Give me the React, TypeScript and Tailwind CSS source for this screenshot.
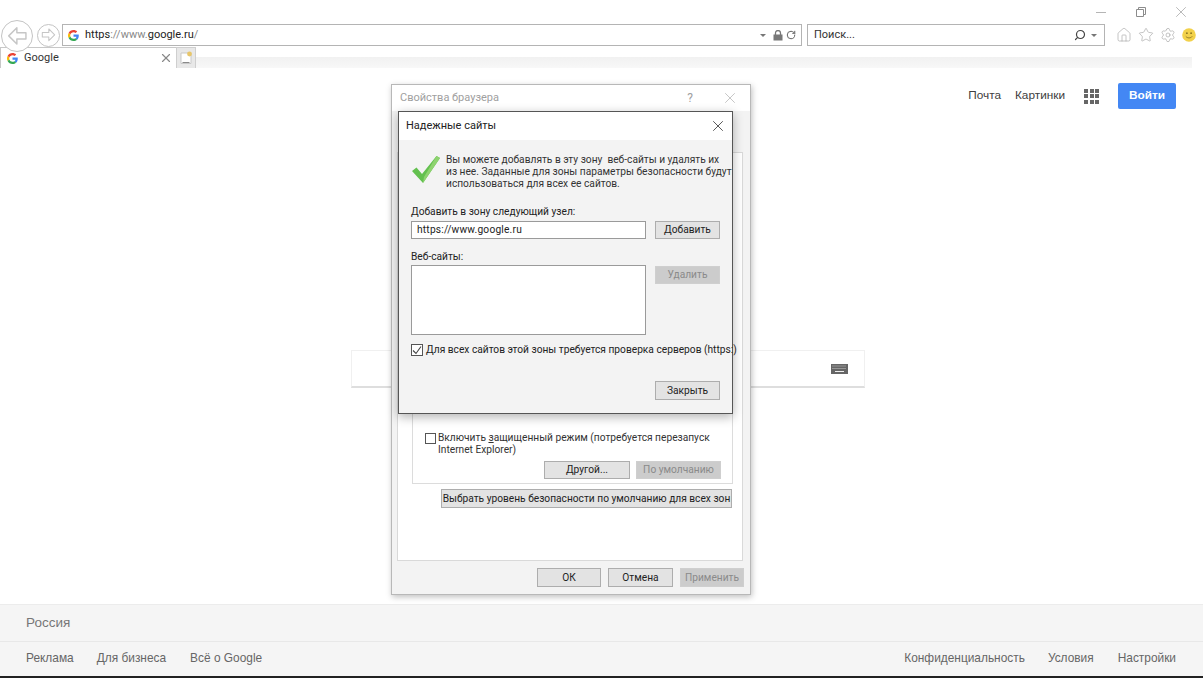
import { Home, RotateCw, Search, Settings, Star, X } from 'lucide-react';

const ui = "font-['Roboto','Open_Sans',sans-serif]";
const web = "font-['Liberation_Sans',Arial,sans-serif]";

function GoogleG({ size = 12 }: { size?: number }) {
  return (
    <svg width={size} height={size} viewBox="0 0 48 48" className="shrink-0">
      <path fill="#EA4335" d="M24 9.5c3.54 0 6.71 1.22 9.21 3.6l6.85-6.85C35.9 2.38 30.47 0 24 0 14.62 0 6.51 5.38 2.56 13.22l7.98 6.19C12.43 13.72 17.74 9.5 24 9.5z" />
      <path fill="#4285F4" d="M46.98 24.55c0-1.57-.15-3.09-.38-4.55H24v9.02h12.94c-.58 2.96-2.26 5.48-4.78 7.18l7.73 6c4.51-4.18 7.09-10.36 7.09-17.65z" />
      <path fill="#FBBC05" d="M10.53 28.59c-.48-1.45-.76-2.99-.76-4.59s.27-3.14.76-4.59l-7.98-6.19C.92 16.46 0 20.12 0 24c0 3.88.92 7.54 2.56 10.78l7.97-6.19z" />
      <path fill="#34A853" d="M24 48c6.48 0 11.93-2.13 15.89-5.81l-7.73-6c-2.15 1.45-4.92 2.3-8.16 2.3-6.26 0-11.57-4.22-13.47-9.91l-7.98 6.19C6.51 42.62 14.62 48 24 48z" />
    </svg>
  );
}

function NavArrow({ size, flip }: { size: number; flip?: boolean }) {
  return (
    <div
      className="flex shrink-0 items-center justify-center rounded-full border border-[#c4c4c4] bg-white"
      style={{ width: size, height: size }}
    >
      <svg
        width={size * 0.68}
        height={size * 0.68}
        viewBox="0 0 24 24"
        fill="none"
        stroke="#c6c6c6"
        strokeWidth="1.6"
        style={flip ? { transform: 'scaleX(-1)' } : undefined}
      >
        <path d="M12 3 3 12l9 9v-5.5h10v-7H12z" strokeLinejoin="round" />
      </svg>
    </div>
  );
}

function WinButton({
  label,
  disabled,
  className,
}: {
  label: React.ReactNode;
  disabled?: boolean;
  className: string;
}) {
  return (
    <div
      className={`flex items-center justify-center border text-[10.2px] ${
        disabled
          ? 'border-[#cfcfcf] bg-[#cccccc] text-[#8a8a8a]'
          : 'border-[#adadad] bg-[#e3e3e3] text-[#222]'
      } ${className}`}
    >
      <span>{label}</span>
    </div>
  );
}

function BrowserChrome() {
  return (
    <div className={`h-[68px] shrink-0 bg-white ${ui}`}>
      <div className="flex h-6 items-center justify-end pr-[13px]">
        <div className="mr-[30px] h-px w-[10px] bg-[#b5b5b5]" />
        <svg width="10" height="10" viewBox="0 0 10 10" fill="none" stroke="#8c8c8c" className="mr-[26px]">
          <path d="M.5 2.5h7v7h-7zM2.5 2.5v-2h7v7h-2" />
        </svg>
        <X size={18} strokeWidth={0.8} className="text-[#8c8c8c]" />
      </div>
      <div className="flex h-[22px] items-center">
        <div className="relative z-10 ml-px mt-px">
          <NavArrow size={32} />
        </div>
        <div className="ml-[4px]">
          <NavArrow size={23} flip />
        </div>
        <div className="ml-[2px] flex h-[22px] w-[740px] items-center border border-[#b4b4b4] pl-[5px] pr-[5px]">
          <GoogleG size={11} />
          <span className="ml-[6px] text-[11px] text-[#888]">
            <span className="text-[#222]">https</span>://www.<span className="text-[#222]">google.ru</span>/
          </span>
          <div className="ml-auto mr-[7px] h-0 w-0 border-x-[3px] border-t-[3px] border-x-transparent border-t-[#777]" />
          <svg width="10" height="11" viewBox="0 0 10 11" className="mr-[3px]">
            <rect x="0.5" y="4.5" width="9" height="6" fill="#777" />
            <path d="M2.5 5V3a2.5 2.5 0 0 1 5 0v2" fill="none" stroke="#777" strokeWidth="1.3" />
          </svg>
          <RotateCw size={10} strokeWidth={2.4} className="text-[#666]" />
        </div>
        <div className="ml-[5px] flex h-[22px] w-[298px] items-center border border-[#b4b4b4] pl-[6px] pr-[7px]">
          <span className="text-[11px] text-[#333]">Поиск...</span>
          <Search size={12} strokeWidth={2.4} className="ml-auto -scale-x-100 text-[#444]" />
          <div className="ml-[5px] h-0 w-0 border-x-[3px] border-t-[3px] border-x-transparent border-t-[#777]" />
        </div>
        <div className="ml-[11px] flex items-center gap-[6px] text-[#a8a8a8]">
          <Home size={16} strokeWidth={1} />
          <Star size={16} strokeWidth={1} />
          <Settings size={16} strokeWidth={1} />
        </div>
        <svg width="14" height="14" viewBox="0 0 14 14" className="ml-[6px]">
          <circle cx="7" cy="7" r="6.8" fill="#f2d14a" />
          <circle cx="4.9" cy="5.2" r="0.9" fill="#8a7420" />
          <circle cx="9.1" cy="5.2" r="0.9" fill="#8a7420" />
          <path d="M3.8 8.4c1.6 2 4.8 2 6.4 0" fill="none" stroke="#8a7420" strokeWidth="0.9" />
        </svg>
      </div>
      <div className="mt-[1px] flex h-[21px]">
        <div className="flex w-[176px] items-center border-l border-t border-[#c8c8c8] pl-[6px] pr-[3px]">
          <GoogleG size={11} />
          <span className="ml-[6px] text-[11px] text-[#333]">Google</span>
          <X size={14} className="ml-auto text-[#888]" />
        </div>
        <div className="flex w-[20px] items-center justify-center border border-b-0 border-[#cfcfcf] bg-[#e8e8e8]">
          <svg width="14" height="14" viewBox="0 0 14 14">
            <path d="M2 2h10v10.5H2z" fill="#fff" stroke="#c9c9c9" />
            <circle cx="10.5" cy="3" r="2.4" fill="#e8c66a" />
            <path d="M3.5 11.5h7" stroke="#8a8a8a" />
          </svg>
        </div>
        <div className="mt-[10px] h-[11px] w-[996px] bg-gradient-to-b from-[#f1f1f1] to-[#f8f8f8]" />
      </div>
    </div>
  );
}

function GoogleMain() {
  return (
    <div className={`relative flex-1 bg-white ${web}`}>
      <div className="flex h-[41px] items-center justify-end pr-[27px] pt-[15px] text-[11.8px] text-[#404040]">
        <span>Почта</span>
        <span className="ml-[14px]">Картинки</span>
        <div className="ml-[19px] grid grid-cols-3 gap-[1.5px]">
          {Array.from({ length: 9 }).map((_, i) => (
            <div key={i} className="h-[4px] w-[4px] bg-[#666]" />
          ))}
        </div>
        <div className="ml-[19px] flex h-[26px] w-[58px] items-center justify-center rounded-[2px] bg-[#4387f4] text-[11.8px] font-bold text-white">
          Войти
        </div>
      </div>
      <div className="ml-[351px] mt-[241px] flex h-[38px] w-[514px] items-center justify-end border border-[#f0f0f0] border-b-2 border-b-[#dedede] bg-white pr-[16px]">
        <svg width="17" height="10" viewBox="0 0 17 10">
          <rect width="17" height="10" fill="#666" />
          <path d="M1.5 2h14M1.5 4.5h14" stroke="#c8c8c8" strokeDasharray="1 1" />
          <path d="M4 7.5h9" stroke="#eee" />
        </svg>
      </div>
    </div>
  );
}

function Footer() {
  return (
    <div className={`h-[74px] shrink-0 ${web}`}>
      <div className="h-[72px] border-t border-[#ececec] bg-[#f5f5f5] text-[#777]">
        <div className="flex h-[37px] items-center border-b border-[#e8e8e8] pl-[26px] text-[13.5px]">Россия</div>
        <div className="flex h-[34px] items-center pl-[26px] pr-[27px] text-[11.9px] text-[#666]">
          <span>Реклама</span>
          <span className="ml-[23px]">Для бизнеса</span>
          <span className="ml-[24px]">Всё о Google</span>
          <span className="ml-auto">Конфиденциальность</span>
          <span className="ml-[23px]">Условия</span>
          <span className="ml-[24px]">Настройки</span>
        </div>
      </div>
      <div className="h-[2px] bg-[#222]" />
    </div>
  );
}

function BrowserProperties() {
  return (
    <div className={`absolute left-[391px] top-[84px] flex h-[511px] w-[360px] flex-col border border-[#b8b8b8] bg-[#f3f3f3] shadow-[1px_2px_6px_rgba(0,0,0,0.25)] ${ui}`}>
      <div className="flex h-[26px] shrink-0 items-center bg-white pl-[8px] pr-[11px] text-[11px] text-[#a0a0a0]">
        <span>Свойства браузера</span>
        <span className="ml-auto mr-[28px] text-[12px]">?</span>
        <X size={18} strokeWidth={0.8} />
      </div>
      <div className="ml-[5px] mt-[41px] flex h-[409px] w-[346px] flex-col border border-[#d9d9d9] bg-white pl-[14px] pr-[9px] text-[10.2px] text-[#333]">
        <div className="mt-[260px] h-[71px] w-[321px] border border-t-0 border-[#dcdcdc] pl-[12px] pr-[11px]">
          <div className="flex gap-[2px] pt-[19px] leading-[12px]">
            <div className="mt-px h-[11px] w-[11px] shrink-0 border border-[#555] bg-white" />
            <span className="whitespace-nowrap">
              Включить <u>з</u>ащищенный режим (потребуется перезапуск
              <br />
              Internet Explorer)
            </span>
          </div>
          <div className="mt-[5px] flex justify-end gap-[6px]">
            <WinButton label="Другой..." className="h-[18px] w-[86px]" />
            <WinButton label="По умолчанию" disabled className="h-[18px] w-[85px]" />
          </div>
        </div>
        <WinButton
          label="Выбрать уровень безопасности по умолчанию для всех зон"
          className="ml-[29px] mt-[5px] h-[19px] w-[291px] whitespace-nowrap"
        />
      </div>
      <div className="flex flex-1 items-center justify-end gap-[7px] pr-[6px]">
        <WinButton label="ОК" className="h-[19px] w-[64px]" />
        <WinButton label="Отмена" className="h-[19px] w-[65px]" />
        <WinButton label="Применить" disabled className="h-[19px] w-[64px]" />
      </div>
    </div>
  );
}

function TrustedSites() {
  return (
    <div className={`absolute left-[398px] top-[111px] flex h-[303px] w-[335px] flex-col border border-[#555] bg-[#f3f3f3] shadow-[0_3px_10px_rgba(0,0,0,0.3)] ${ui} text-[10.2px] text-[#222]`}>
      <div className="flex h-[28px] shrink-0 items-center justify-between bg-white pl-[7px] pr-[5px]">
        <span className="text-[11px]">Надежные сайты</span>
        <X size={18} strokeWidth={1} className="text-[#222]" />
      </div>
      <div className="flex-1 pl-[12px] pr-[12px]">
        <div className="flex pt-[14px]">
          <svg width="30" height="29" viewBox="0 0 30 29" className="mt-px shrink-0">
            <path d="M1 16 5.5 12.5 11 19 25.5 1 29 3 12 28z" fill="#63c04f" />
            <path d="M12 28 29 3 25.5 1 13 22z" fill="#8ed36f" />
          </svg>
          <p className="ml-[5px] whitespace-nowrap leading-[12px] text-[#333]">
            Вы можете добавлять в эту зону&nbsp; веб-сайты и удалять их
            <br />
            из нее. Заданные для зоны параметры безопасности будут
            <br />
            использоваться для всех ее сайтов.
          </p>
        </div>
        <div className="mt-[15px] leading-[14px]">Добавить в зону следующий узел:</div>
        <div className="mt-[2px] flex items-center justify-between">
          <div className="flex h-[18px] w-[235px] items-center border border-[#9a9a9a] bg-white pl-[5px] tracking-[0.2px]">
            https://www.google.ru
          </div>
          <WinButton label="Добавить" className="h-[18px] w-[65px]" />
        </div>
        <div className="mt-[11px] leading-[14px]">Веб-сайты:</div>
        <div className="mt-[1px] flex items-start justify-between">
          <div className="h-[70px] w-[235px] border border-[#9a9a9a] bg-white" />
          <WinButton label="Удалить" disabled className="mt-px h-[18px] w-[65px]" />
        </div>
        <div className="mt-[8px] flex h-[14px] items-center gap-[3px] whitespace-nowrap leading-[14px]">
          <div className="flex h-[12px] w-[12px] shrink-0 items-center justify-center border border-[#555] bg-white">
            <svg width="10" height="10" viewBox="0 0 10 10" fill="none" stroke="#444" strokeWidth="1.1">
              <path d="M1 5.5 4 8.5 9 1.5" />
            </svg>
          </div>
          <span>Для всех сайтов этой зоны требуется проверка серверов (https:)</span>
        </div>
        <div className="mt-[24px] flex justify-end">
          <WinButton label="Закрыть" className="h-[19px] w-[65px]" />
        </div>
      </div>
    </div>
  );
}

export default function App() {
  return (
    <div className="relative flex h-[678px] w-[1203px] flex-col overflow-hidden bg-white">
      <BrowserChrome />
      <GoogleMain />
      <Footer />
      <BrowserProperties />
      <TrustedSites />
    </div>
  );
}
